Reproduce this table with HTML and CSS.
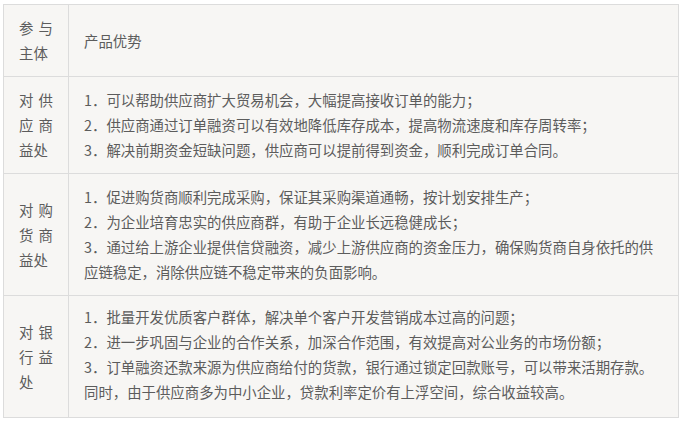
FILE: index.html
```html
<!DOCTYPE html>
<html lang="zh-CN">
<head>
    <meta charset="UTF-8">
    <title>订单融资产品优势</title>
    <link rel="stylesheet" href="styles.css">
</head>
<body>

    <table class="benefits">
        <tr>
            <td class="who">参与主体</td>
            <td class="points">产品优势</td>
        </tr>
        <tr>
            <td class="who">对供应商益处</td>
            <td class="points">
                1．可以帮助供应商扩大贸易机会，大幅提高接收订单的能力；<br>
                2．供应商通过订单融资可以有效地降低库存成本，提高物流速度和库存周转率；<br>
                3．解决前期资金短缺问题，供应商可以提前得到资金，顺利完成订单合同。
            </td>
        </tr>
        <tr>
            <td class="who">对购货商益处</td>
            <td class="points">
                1．促进购货商顺利完成采购，保证其采购渠道通畅，按计划安排生产；<br>
                2．为企业培育忠实的供应商群，有助于企业长远稳健成长；<br>
                3．通过给上游企业提供信贷融资，减少上游供应商的资金压力，确保购货商自身依托的供应链稳定，消除供应链不稳定带来的负面影响。
            </td>
        </tr>
        <tr>
            <td class="who">对银行益处</td>
            <td class="points last">
                1．批量开发优质客户群体，解决单个客户开发营销成本过高的问题；<br>
                2．进一步巩固与企业的合作关系，加深合作范围，有效提高对公业务的市场份额；<br>
                3．订单融资还款来源为供应商给付的货款，银行通过锁定回款账号，可以带来活期存款。同时，由于供应商多为中小企业，贷款利率定价有上浮空间，综合收益较高。
            </td>
        </tr>
    </table>

</body>
</html>
```

FILE: styles.css
```css
body {
    margin: 0;
    padding: 4px 0 0 3px;
    background: #ffffff;
    font-family: "Noto Sans CJK SC", "Noto Sans", sans-serif;
    color: #5c5c5c;
}
.benefits {
    border-collapse: collapse;
    width: 676px;
    background: #f7f6f4;
}
.benefits td {
    border: 1px solid #dcdcdc;
    padding: 10px 15px 11px 15px;
    font-size: 14.4px;
    line-height: 25px;
    vertical-align: middle;
}
.who {
    width: 34px;
    text-align: justify;
}
.points {
    text-align: left;
    padding-left: 16px;
}
.points.last {
    padding-top: 8px;
    padding-bottom: 13px;
}
```
